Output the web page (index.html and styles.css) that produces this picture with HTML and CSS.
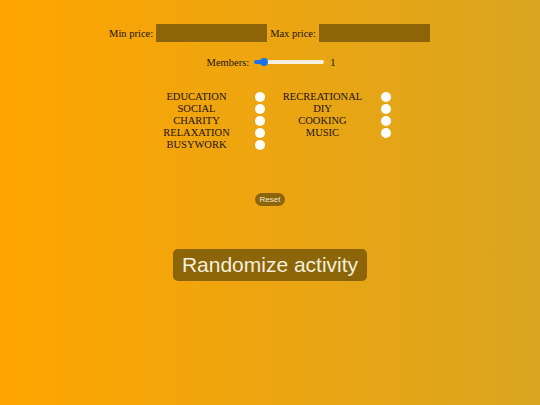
FILE: index.html
```html
<!DOCTYPE html>
<html>
<head>
<meta charset="utf-8">
<link rel="stylesheet" href="styles.css">
</head>
<body>
<div class="app">
  <div class="price-row">
    <label class="lbl">Min price:</label>
    <input class="price" type="text">
    <label class="lbl">Max price:</label>
    <input class="price" type="text">
  </div>
  <div class="members-row">
    <label class="lbl">Members:</label>
    <input class="range" type="range" min="0" max="10" value="1">
    <span class="lbl val">1</span>
  </div>
  <div class="types">
    <div class="col">
      <div class="opt"><span class="name">EDUCATION</span><input class="chk" type="checkbox"></div>
      <div class="opt"><span class="name">SOCIAL</span><input class="chk" type="checkbox"></div>
      <div class="opt"><span class="name">CHARITY</span><input class="chk" type="checkbox"></div>
      <div class="opt"><span class="name">RELAXATION</span><input class="chk" type="checkbox"></div>
      <div class="opt"><span class="name">BUSYWORK</span><input class="chk" type="checkbox"></div>
    </div>
    <div class="col">
      <div class="opt"><span class="name">RECREATIONAL</span><input class="chk" type="checkbox"></div>
      <div class="opt"><span class="name">DIY</span><input class="chk" type="checkbox"></div>
      <div class="opt"><span class="name">COOKING</span><input class="chk" type="checkbox"></div>
      <div class="opt"><span class="name">MUSIC</span><input class="chk" type="checkbox"></div>
    </div>
  </div>
  <button class="reset">Reset</button>
  <button class="randomize">Randomize activity</button>
</div>
</body>
</html>
```
FILE: styles.css
```css
html, body {
  margin: 0;
  padding: 0;
  height: 100%;
}
body {
  background: linear-gradient(to right, #ffa500, #daa520);
  font-family: "Liberation Serif", "Times New Roman", serif;
  color: #1a1200;
}
.app {
  display: flex;
  flex-direction: column;
  align-items: center;
}
.lbl {
  font-size: 10.5px;
}
.price-row {
  display: flex;
  align-items: center;
  gap: 2px;
  margin-top: 24px;
  height: 18px;
}
.price {
  width: 111px;
  height: 18px;
  box-sizing: border-box;
  border: none;
  background: #8b6508;
  margin: 0 1px;
  padding: 0;
}
.members-row {
  display: flex;
  align-items: center;
  margin-top: 12px;
  height: 16px;
  margin-left: 2px;
}
.range {
  -webkit-appearance: none;
  appearance: none;
  width: 70px;
  height: 4px;
  margin: 0 6px 0 5px;
  border-radius: 2px;
  background: linear-gradient(to right, #1a73e8 0 11px, #f6f0e2 11px 100%);
  outline: none;
}
.range::-webkit-slider-thumb {
  -webkit-appearance: none;
  appearance: none;
  width: 8px;
  height: 8px;
  border-radius: 50%;
  background: #1a73e8;
  border: none;
}
.types {
  display: flex;
  gap: 18px;
  margin-top: 21px;
  margin-left: 7px;
}
.col {
  display: flex;
  flex-direction: column;
}
.opt {
  display: flex;
  align-items: center;
  height: 12px;
  gap: 18px;
}
.name {
  width: 80px;
  text-align: center;
  font-size: 10.5px;
  line-height: 12px;
}
.chk {
  appearance: none;
  -webkit-appearance: none;
  width: 10px;
  height: 10px;
  margin: 0;
  border-radius: 50%;
  background: #ffffff;
  border: none;
}
.reset {
  margin-top: 42px;
  background: #8b6508;
  color: #f3ead2;
  border: none;
  border-radius: 7px;
  font-family: "Liberation Sans", Arial, sans-serif;
  font-size: 8px;
  height: 13px;
  padding: 0 5px;
  line-height: 13px;
}
.randomize {
  margin-top: 43px;
  background: #8b6508;
  color: #f5efdc;
  border: none;
  border-radius: 5px;
  font-family: "Liberation Sans", Arial, sans-serif;
  font-size: 21px;
  height: 32px;
  padding: 0 9px;
}
```
